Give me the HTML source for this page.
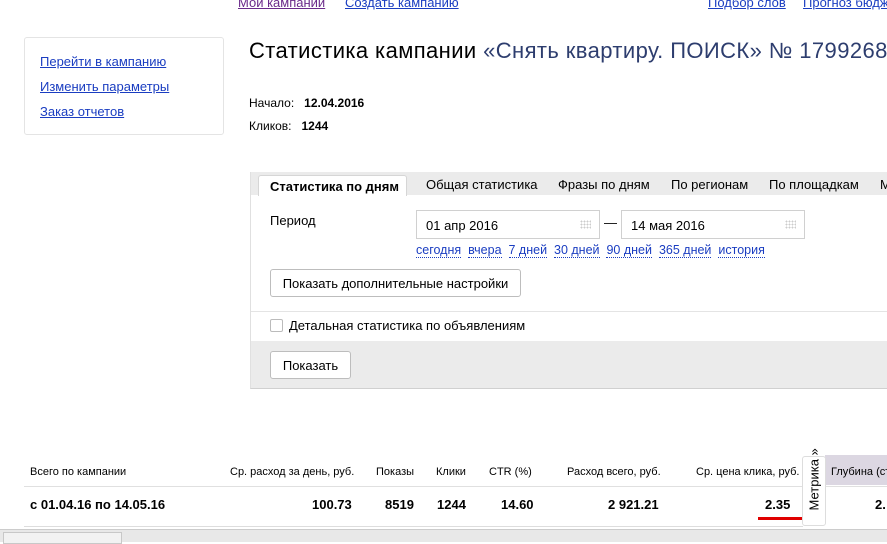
<!DOCTYPE html>
<html><head><meta charset="utf-8"><style>
*{margin:0;padding:0;box-sizing:border-box}
body{width:887px;height:542px;overflow:hidden;background:#fff;font-family:"Liberation Sans",sans-serif;color:#000;position:relative}
.a{position:absolute;white-space:nowrap}
a{color:#1a3dc1;text-decoration:underline}
.f{font-size:13px}
.d{color:#1a3dc1;border-bottom:1px dotted #1a3dc1;font-size:12.5px}
.btn{position:absolute;background:#fff;border:1px solid #bdbdbd;border-radius:3px;font-size:13px;text-align:center}
.inp{position:absolute;border:1px solid #d0d0d0;background:#fff;font-size:13px;padding:7px 9px;height:29px}
.grid{position:absolute;right:8px;top:9px;width:11px;height:9px;background:radial-gradient(#ccc 40%,transparent 45%) 0 0/3px 3px}
.h{font-size:11px;top:466px}
.r{font-size:13px;font-weight:bold;top:497px}
</style></head><body>
<div class="a f" style="left:238px;top:-5px"><a style="color:#6a2a8a">Мои кампании</a></div>
<div class="a f" style="left:345px;top:-5px"><a>Создать кампанию</a></div>
<div class="a f" style="left:708px;top:-5px"><a>Подбор слов</a></div>
<div class="a f" style="left:803px;top:-5px"><a>Прогноз бюджета</a></div>

<div class="a" style="left:24px;top:37px;width:200px;height:98px;border:1px solid #e4e4e4;border-radius:3px"></div>
<div class="a f" style="left:40px;top:54px"><a>Перейти в кампанию</a></div>
<div class="a f" style="left:40px;top:79px"><a>Изменить параметры</a></div>
<div class="a f" style="left:40px;top:104px"><a>Заказ отчетов</a></div>

<div class="a" style="left:249px;top:38px;font-size:22px;letter-spacing:0.4px">Статистика кампании <span style="color:#2d3d6e">«Снять квартиру. ПОИСК» № 17992687</span></div>
<div class="a" style="left:249px;top:96px;font-size:12px">Начало:&nbsp;&nbsp; <b>12.04.2016</b></div>
<div class="a" style="left:249px;top:119px;font-size:12px">Кликов:&nbsp;&nbsp; <b>1244</b></div>

<div class="a" style="left:250px;top:172px;width:637px;height:217px;border-left:1px solid #e0e0e0;border-bottom:1px solid #d0d0d0"></div>
<div class="a" style="left:251px;top:172px;width:636px;height:23px;background:#ebebeb"></div>
<div class="a" style="left:258px;top:175px;width:149px;height:21px;background:#fff;border:1px solid #d6d6d6;border-bottom:none;border-radius:3px 3px 0 0;font-size:13px;font-weight:bold;padding:3px 0 0 11px">Статистика по дням</div>
<div class="a f" style="left:426px;top:177px">Общая статистика</div>
<div class="a f" style="left:558px;top:177px">Фразы по дням</div>
<div class="a f" style="left:671px;top:177px">По регионам</div>
<div class="a f" style="left:769px;top:177px">По площадкам</div>
<div class="a f" style="left:880px;top:177px">М</div>

<div class="a f" style="left:270px;top:213px">Период</div>
<div class="inp" style="left:416px;top:210px;width:184px">01 апр 2016<span class="grid"></span></div>
<div class="a f" style="left:604px;top:215px">—</div>
<div class="inp" style="left:621px;top:210px;width:184px">14 мая 2016<span class="grid"></span></div>
<div class="a" style="left:416px;top:243px;font-size:12.5px"><span class="d">сегодня</span>&nbsp; <span class="d">вчера</span>&nbsp; <span class="d">7 дней</span>&nbsp; <span class="d">30 дней</span>&nbsp; <span class="d">90 дней</span>&nbsp; <span class="d">365 дней</span>&nbsp; <span class="d">история</span></div>
<div class="btn" style="left:270px;top:269px;width:251px;height:28px;padding-top:6px">Показать дополнительные настройки</div>
<div class="a" style="left:251px;top:311px;width:636px;border-top:1px solid #e4e4e4"></div>
<div class="a" style="left:270px;top:319px;width:13px;height:13px;border:1px solid #bbb;border-radius:2px"></div>
<div class="a f" style="left:289px;top:318px">Детальная статистика по объявлениям</div>
<div class="a" style="left:251px;top:341px;width:636px;height:47px;background:#ebebeb"></div>
<div class="btn" style="left:270px;top:351px;width:81px;height:28px;padding-top:6px">Показать</div>

<div class="a" style="left:825px;top:455px;width:62px;height:30px;background:#dcd7e2"></div>
<div class="a" style="left:24px;top:486px;width:863px;border-top:1px solid #e0e0e0"></div>
<div class="a" style="left:24px;top:526px;width:779px;border-top:1px solid #ddd"></div>
<div class="a h" style="left:30px">Всего по кампании</div>
<div class="a h" style="left:230px">Ср. расход за день, руб.</div>
<div class="a h" style="left:376px">Показы</div>
<div class="a h" style="left:436px">Клики</div>
<div class="a h" style="left:489px">CTR (%)</div>
<div class="a h" style="left:567px">Расход всего, руб.</div>
<div class="a h" style="left:696px">Ср. цена клика, руб.</div>
<div class="a h" style="left:831px">Глубина (ст</div>
<div class="a r" style="left:30px">с 01.04.16 по 14.05.16</div>
<div class="a r" style="left:312px">100.73</div>
<div class="a r" style="left:385px">8519</div>
<div class="a r" style="left:437px">1244</div>
<div class="a r" style="left:501px">14.60</div>
<div class="a r" style="left:608px">2 921.21</div>
<div class="a r" style="left:765px">2.35</div>
<div class="a r" style="left:875px">2.</div>
<div class="a" style="left:758px;top:517px;width:47px;height:3px;background:#e00000"></div>
<div class="a" style="left:802px;top:456px;width:24px;height:70px;background:#fff;border:1px solid #ddd;border-radius:3px"></div>
<div class="a" style="left:793px;top:482px;font-size:13px;transform:rotate(-90deg);transform-origin:center;width:42px;text-align:center">Метрика »</div>

<div class="a" style="left:0;top:529px;width:887px;height:13px;background:#e8e8e8;border-top:1px solid #ccc"></div>
<div class="a" style="left:3px;top:532px;width:119px;height:12px;background:#f2f2f2;border:1px solid #c8c8c8"></div>
</body></html>
